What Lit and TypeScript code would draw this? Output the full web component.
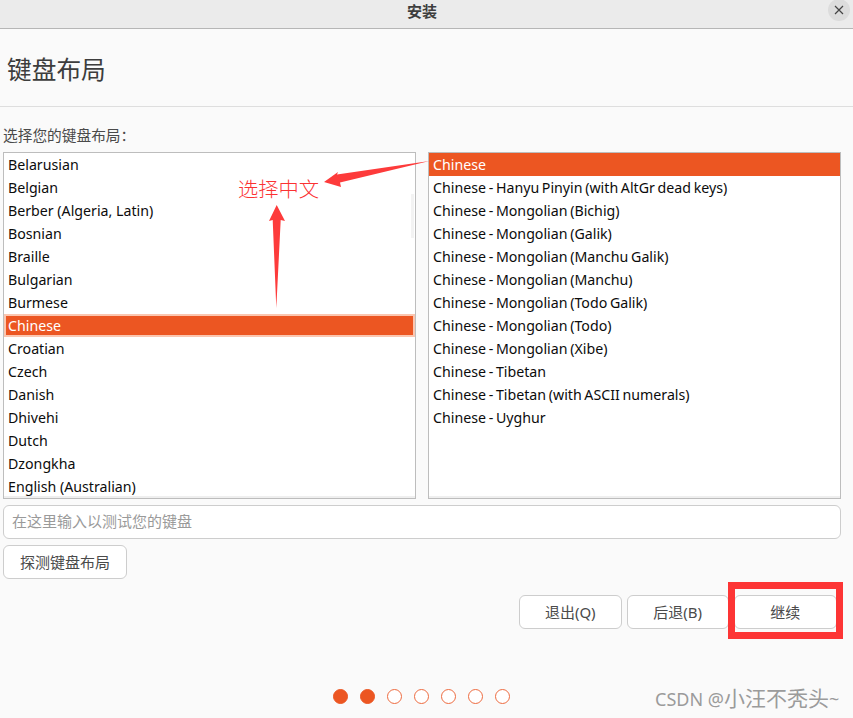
import { LitElement, html, css } from "lit";
import { customElement } from "lit/decorators.js";

const LEFT = ["Belarusian","Belgian","Berber (Algeria, Latin)","Bosnian","Braille","Bulgarian","Burmese","Chinese","Croatian","Czech","Danish","Dhivehi","Dutch","Dzongkha","English (Australian)"];
const RIGHT = ["Chinese","Chinese - Hanyu Pinyin (with AltGr dead keys)","Chinese - Mongolian (Bichig)","Chinese - Mongolian (Galik)","Chinese - Mongolian (Manchu Galik)","Chinese - Mongolian (Manchu)","Chinese - Mongolian (Todo Galik)","Chinese - Mongolian (Todo)","Chinese - Mongolian (Xibe)","Chinese - Tibetan","Chinese - Tibetan (with ASCII numerals)","Chinese - Uyghur"];

@customElement("app-root")
export class AppRoot extends LitElement {
  static styles = css`
    :host { display: block; width: 853px; height: 718px; position: relative; overflow: hidden; background: #fafafa; color: #3d3d3d;
      font-family: "Noto Sans", "Noto Sans CJK SC", sans-serif; font-size: 15px; }
    .titlebar { height: 28px; background: #ebebeb; border-bottom: 1px solid #b6b6b6; display: flex; align-items: center; justify-content: center; position: relative; font-weight: 700; font-size: 15px; padding-right: 9px; }
    .titlebar span { margin-top: -7px; }
    .close { position: absolute; right: 3px; top: -1px; width: 22px; height: 22px; border-radius: 50%; background: #dcdcdc; display: flex; align-items: center; justify-content: center; }
    .head { height: 77px; border-bottom: 1px solid #dedede; display: flex; align-items: center; padding-left: 7px; font-size: 24.7px; }
    .head span { margin-top: 1px; }
    .label { height: 45px; padding: 0 0 7px 3px; display: flex; align-items: flex-end; font-size: 14.7px; line-height: 20px; box-sizing: border-box; color: #4a4a4a; }
    .lists { display: flex; gap: 12px; padding-left: 3px; }
    .list { width: 413px; height: 347px; box-sizing: border-box; background: #fff; border: 1px solid #bdbdbd; box-shadow: inset 0 -2px 0 #efefef; position: relative; overflow: hidden; }
    .rows { display: flex; flex-direction: column; }
    .row { height: 23px; line-height: 23px; padding-left: 4px; font-size: 14.2px; color: #0c0c0c; white-space: nowrap; }
    .right .row { word-spacing: -1px; }
    .row.sel { background: #ec5622; color: #fff; }
    .row.focus { outline: 2px solid #fbc6b0; outline-offset: -2px; }
    .scroll { position: absolute; right: 1px; top: 41px; width: 3px; height: 44px; background: #f3f3f3; }
    .input { margin: 6px 0 0 3px; width: 838px; height: 34px; box-sizing: border-box; border: 1px solid #cdcdcd; border-radius: 6px; background: #fff; display: flex; align-items: center; padding: 0 0 3px 8px; font-size: 15px; color: #9a9a9a; }
    .probe { margin: 6px 0 0 3px; width: 124px; height: 34px; padding-bottom: 2px; }
    .btn { box-sizing: border-box; border: 1px solid #cdcdcd; border-radius: 6px; background: #fff; display: flex; align-items: center; justify-content: center; font-size: 15px; color: #4a4a4a; }
    .actions { display: flex; gap: 5px; margin: 16px 0 0 519px; }
    .actions .btn { width: 102.5px; height: 34px; padding-bottom: 2px; }
    .dots { display: flex; gap: 12px; margin: 60px 0 0 333px; }
    .dot { width: 15px; height: 15px; box-sizing: border-box; border-radius: 50%; border: 1.5px solid #ee6b40; background: #fff; }
    .dot.on { background: #ec5622; border-color: #ec5622; }
    .overlay { position: absolute; left: 0; top: 0; pointer-events: none; }
    .note { position: absolute; left: 238px; top: 175px; font-size: 20.3px; line-height: 26px; color: #fb3232; font-family: "Noto Sans CJK SC", sans-serif; font-weight: 300; }
    .redbox { position: absolute; left: 728px; top: 582px; width: 115px; height: 57px; box-sizing: border-box; border: 7px solid #fd3535; }
    .mark { position: absolute; left: 655px; top: 685px; font-size: 18px; line-height: 26px; color: #9b9b9b; white-space: nowrap; }
    .mark b { font-size: 21px; font-weight: 400; }
  `;

  render() {
    return html`
      <div class="titlebar"><span>安装</span>
        <div class="close"><svg width="10" height="10" viewBox="0 0 10 10"><path d="M1 1 9 9M9 1 1 9" stroke="#444" stroke-width="1.2" fill="none"/></svg></div>
      </div>
      <div class="head"><span>键盘布局</span></div>
      <div class="label">选择您的键盘布局：</div>
      <div class="lists">
        <div class="list left">
          <div class="rows">${LEFT.map(r => html`<div class="row ${r === "Chinese" ? "sel focus" : ""}">${r}</div>`)}</div>
          <div class="scroll"></div>
        </div>
        <div class="list right">
          <div class="rows">${RIGHT.map((r, i) => html`<div class="row ${i === 0 ? "sel" : ""}">${r}</div>`)}</div>
        </div>
      </div>
      <div class="input">在这里输入以测试您的键盘</div>
      <div class="btn probe">探测键盘布局</div>
      <div class="actions">
        <div class="btn">退出(Q)</div>
        <div class="btn">后退(B)</div>
        <div class="btn">继续</div>
      </div>
      <div class="dots">${[1,1,0,0,0,0,0].map(d => html`<div class="dot ${d ? "on" : ""}"></div>`)}</div>
      <svg class="overlay" width="853" height="718" viewBox="0 0 853 718">
        <path d="M429.500 161 337 174.500 338 172 324 182 341 187 340 182.500Z" fill="#fd3b3b"/>
        <path d="M276.700 205 285 221 280.700 220 276.300 308 272.700 220 269 221Z" fill="#fd3b3b"/>
      </svg>
      <div class="note">选择中文</div>
      <div class="redbox"></div>
      <div class="mark">CSDN @<b>小汪不秃头</b>~</div>
    `;
  }
}
